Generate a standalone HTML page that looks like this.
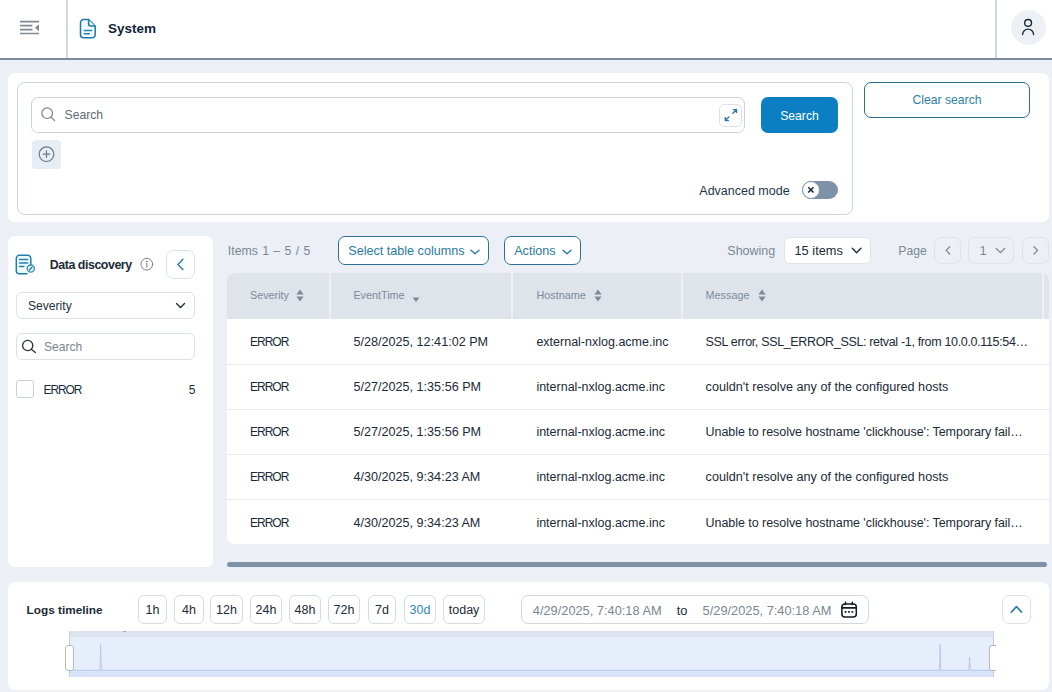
<!DOCTYPE html>
<html><head><meta charset="utf-8">
<style>
*{box-sizing:border-box;margin:0;padding:0}
html,body{width:1052px;height:692px;overflow:hidden;background:#ecf0f6;font-family:"Liberation Sans",sans-serif;color:#1c2b3a}
.a{position:absolute}
.t{position:absolute;line-height:1;white-space:nowrap}
svg{position:absolute;overflow:visible}
</style></head><body>
<!-- HEADER -->
<div class="a" style="left:0;top:0;width:1052px;height:58px;background:#fff"></div>
<div class="a" style="left:0;top:58px;width:1052px;height:2px;background:#7a8b9d"></div>
<div class="a" style="left:66px;top:0;width:2px;height:58px;background:#d3d8dd"></div>
<div class="a" style="left:995px;top:0;width:2px;height:58px;background:#d3d8dd"></div>
<svg style="left:0;top:0" width="60" height="58"><g stroke="#7f8a96" stroke-width="1.6" stroke-linecap="butt" fill="none">
<path d="M20 21.6H39M20 25.6H32.4M20 29.6H32.4M20 33.5H39"/></g>
<path d="M39 24.3V31.2L35 27.75Z" fill="#7f8a96"/></svg>
<svg style="left:79px;top:18px" width="18" height="21" fill="none" stroke="#1a79a6" stroke-width="1.5" stroke-linejoin="round" stroke-linecap="round">
<path d="M4.6 1.6H9.6L16.2 8.2V16.8A3 3 0 0 1 13.2 19.8H4.5A3 3 0 0 1 1.5 16.8V4.7A3.1 3.1 0 0 1 4.6 1.6Z" fill="#f3fbff"/>
<path d="M9.6 1.8V6A2 2 0 0 0 11.6 8H16" fill="#dff4fb"/>
<path d="M5.3 12.4H12.7M5.3 15.8H10.4" stroke="#1f88bb"/></svg>
<div class="t" style="left:108px;top:21.9px;font-size:13.5px;font-weight:bold;color:#10253a">System</div>
<div class="a" style="left:1011px;top:10px;width:35px;height:35px;border-radius:50%;background:#edf1f6"></div>
<svg style="left:1011px;top:10px" width="35" height="35" fill="none" stroke="#1b2838" stroke-width="1.4" stroke-linecap="round">
<circle cx="17.1" cy="12.9" r="3.4"/><path d="M11.6 24.6A5.5 5.5 0 0 1 22.6 24.6"/></svg>

<!-- SEARCH CARD -->
<div class="a" style="left:8px;top:73px;width:1041px;height:149px;background:#fff;border-radius:7px"></div>
<div class="a" style="left:17px;top:82px;width:836px;height:133px;border:1px solid #cfd4da;border-radius:8px"></div>
<div class="a" style="left:31px;top:97px;width:714px;height:36px;border:1px solid #cdd1d6;border-radius:7px"></div>
<svg style="left:40px;top:106px" width="16" height="16" fill="none" stroke="#7b8692" stroke-width="1.2" stroke-linecap="round">
<circle cx="7.2" cy="7.2" r="5.3"/><path d="M11.1 11.1L14.6 14.6"/></svg>
<div class="t" style="left:64.5px;top:108.6px;font-size:12.2px;color:#5f6a75">Search</div>
<div class="a" style="left:719px;top:104px;width:23px;height:23px;border:1px solid #dde1e5;border-radius:5px"></div>
<svg style="left:719px;top:104px" width="23" height="23" fill="none" stroke="#2b7ba6" stroke-width="1.45" stroke-linecap="round" stroke-linejoin="round">
<path d="M14.5 5.6H17.5V8.6M17.5 5.6L13.9 9.2M9.3 16.6H6.3V13.6M6.3 16.6L9.9 13"/></svg>
<div class="a" style="left:761px;top:97px;width:77px;height:36px;background:#0b7fc1;border-radius:7px"></div>
<div class="t" style="left:761px;width:77px;text-align:center;top:109.9px;font-size:12.2px;color:#fff">Search</div>
<div class="a" style="left:32px;top:140px;width:29px;height:29px;background:#e7edf5;border-radius:4px"></div>
<svg style="left:32px;top:140px" width="29" height="29" fill="none" stroke="#6f7b88" stroke-width="1.2" stroke-linecap="round">
<circle cx="14.5" cy="14.2" r="7.3"/><path d="M14.5 10.9V17.5M11.2 14.2H17.8"/></svg>
<div class="t" style="left:699.3px;top:184.9px;font-size:12.5px;color:#22364a">Advanced mode</div>
<div class="a" style="left:802px;top:181px;width:36px;height:18px;background:#7d91a8;border-radius:9px"></div>
<div class="a" style="left:802px;top:181px;width:18px;height:18px;background:#fff;border:1px solid #8596aa;border-radius:50%"></div>
<svg style="left:802px;top:181px" width="18" height="18" fill="none" stroke="#15263a" stroke-width="1.5" stroke-linecap="butt">
<path d="M6.2 6.2L11.5 11.5M11.5 6.2L6.2 11.5"/></svg>
<div class="a" style="left:864px;top:82px;width:166px;height:36px;border:1.5px solid #2c6f8d;border-radius:7px"></div>
<div class="t" style="left:864px;width:166px;text-align:center;top:94.2px;font-size:12.2px;color:#2e80a8">Clear search</div>


<!-- DATA DISCOVERY -->
<div class="a" style="left:8px;top:236px;width:205px;height:331px;background:#fff;border-radius:7px"></div>
<svg style="left:15px;top:254px" width="22" height="22" fill="none" stroke="#1c7fae" stroke-width="1.5" stroke-linecap="round">
<path d="M15.8 14.5V4.3A3 3 0 0 0 12.8 1.3H4.3A3 3 0 0 0 1.3 4.3V16.7A3 3 0 0 0 4.3 19.7H12" fill="#f3fbff"/>
<path d="M4.5 5.5H12.7M4.5 9H12.7M4.5 12.6H8.6" stroke="#2183b1"/>
<circle cx="15.8" cy="14.6" r="3.6" fill="#e3f5fc" stroke="#3b8db5" stroke-width="1.3"/>
<path d="M14.5 16L17 13.3" stroke="#2d7aa3" stroke-width="1.3"/></svg>
<div class="t" style="left:49.8px;top:258.9px;font-size:12.4px;letter-spacing:-0.45px;font-weight:bold;color:#1b2a38">Data discovery</div>
<svg style="left:140px;top:258px" width="14" height="14" fill="none" stroke="#78838e" stroke-width="1" stroke-linecap="round">
<circle cx="6.8" cy="6.2" r="5.9"/><path d="M6.8 5.4V9.2"/><circle cx="6.8" cy="3.5" r="0.45" fill="#707b86"/></svg>
<div class="a" style="left:166px;top:250px;width:29px;height:29px;border:1px solid #dde1e6;border-radius:7px"></div>
<svg style="left:166px;top:250px" width="29" height="29" fill="none" stroke="#2a7da6" stroke-width="1.4" stroke-linecap="round" stroke-linejoin="round">
<path d="M16.9 9.2L11.9 14.4L16.9 19.6"/></svg>
<div class="a" style="left:16px;top:292px;width:179px;height:27px;border:1px solid #dde1e6;border-radius:6px"></div>
<div class="t" style="left:28px;top:299.8px;font-size:12.1px;color:#1d2f40">Severity</div>
<svg style="left:170px;top:296px" width="20" height="20" fill="none" stroke="#22303e" stroke-width="1.4" stroke-linecap="round" stroke-linejoin="round">
<path d="M6.5 7.5L10.5 11.5L14.5 7.5"/></svg>
<div class="a" style="left:16px;top:333px;width:179px;height:27px;border:1px solid #dde1e6;border-radius:6px"></div>
<svg style="left:21px;top:339px" width="16" height="16" fill="none" stroke="#262f38" stroke-width="1.3" stroke-linecap="round">
<circle cx="6.7" cy="6.5" r="5.1"/><path d="M10.3 10.3L14.4 13.6"/></svg>
<div class="t" style="left:44px;top:341px;font-size:12.1px;color:#7c848d">Search</div>
<div class="a" style="left:16px;top:380px;width:18px;height:18px;border:1px solid #cbcfd5;border-radius:3px"></div>
<div class="t" style="left:43.5px;top:383.5px;font-size:12px;color:#1d2f40;letter-spacing:-1.1px">ERROR</div>
<div class="t" style="left:165px;width:30.5px;text-align:right;top:383.5px;font-size:12px;color:#1d2f40">5</div>

<!-- TOOLBAR -->
<div class="t" style="left:227.8px;top:244.9px;font-size:12.3px;word-spacing:0.9px;color:#7b8793">Items 1 – 5 / 5</div>
<div class="a" style="left:338px;top:236px;width:151px;height:29px;border:1px solid #2c7193;border-radius:7px;background:#fff"></div>
<div class="t" style="left:348.3px;top:245.4px;font-size:12.6px;color:#2b7aa2">Select table columns</div>
<svg style="left:468px;top:244.7px" width="14" height="14" fill="none" stroke="#2b7aa2" stroke-width="1.4" stroke-linecap="round" stroke-linejoin="round">
<path d="M3 5.2L7 8.8L11 5.2"/></svg>
<div class="a" style="left:504px;top:236px;width:77px;height:29px;border:1px solid #2c7193;border-radius:7px;background:#fff"></div>
<div class="t" style="left:514.2px;top:245.4px;font-size:12.6px;color:#2b7aa2">Actions</div>
<svg style="left:560px;top:244.7px" width="14" height="14" fill="none" stroke="#2b7aa2" stroke-width="1.4" stroke-linecap="round" stroke-linejoin="round">
<path d="M3 5.2L7 8.8L11 5.2"/></svg>
<div class="t" style="left:727.3px;top:244.8px;font-size:12.5px;color:#7b8793">Showing</div>
<div class="a" style="left:784px;top:237px;width:87px;height:27px;border:1px solid #e0e4e9;border-radius:6px;background:#fff"></div>
<div class="t" style="left:794.5px;top:245px;font-size:12.8px;color:#1b2a38">15 items</div>
<svg style="left:850px;top:244px" width="14" height="14" fill="none" stroke="#1b2a38" stroke-width="1.3" stroke-linecap="round" stroke-linejoin="round">
<path d="M2.3 4.3L6.6 8.7L10.9 4.3"/></svg>
<div class="t" style="left:898.3px;top:244.8px;font-size:12.2px;color:#7b8793">Page</div>
<div class="a" style="left:934px;top:237px;width:27px;height:27px;border:1px solid #dfe3e8;border-radius:7px"></div>
<svg style="left:934px;top:237px" width="27" height="27" fill="none" stroke="#7b8793" stroke-width="1.3" stroke-linecap="round" stroke-linejoin="round">
<path d="M15.7 9.8L12.1 13.4L15.7 17"/></svg>
<div class="a" style="left:968px;top:237px;width:46px;height:27px;border:1px solid #dfe3e8;border-radius:7px"></div>
<div class="t" style="left:979.5px;top:245px;font-size:12.8px;color:#7b8793">1</div>
<svg style="left:993px;top:244px" width="14" height="14" fill="none" stroke="#7b8793" stroke-width="1.3" stroke-linecap="round" stroke-linejoin="round">
<path d="M3.2 4.5L7.4 8.6L11.6 4.5"/></svg>
<div class="a" style="left:1022px;top:237px;width:27px;height:27px;border:1px solid #dfe3e8;border-radius:7px"></div>
<svg style="left:1022px;top:237px" width="27" height="27" fill="none" stroke="#7b8793" stroke-width="1.3" stroke-linecap="round" stroke-linejoin="round">
<path d="M12 9.8L15.6 13.4L12 17"/></svg>

<!-- TABLE -->
<div class="a" style="left:227px;top:273px;width:822px;height:271px;background:#fff;border-radius:7px 7px 0 7px;overflow:hidden">
<div class="a" style="left:0;top:0;width:822px;height:46px;background:#dfe4ea"></div>
<div class="a" style="left:102px;top:0;width:2px;height:46px;background:#eef1f5"></div>
<div class="a" style="left:284px;top:0;width:2px;height:46px;background:#eef1f5"></div>
<div class="a" style="left:454px;top:0;width:2px;height:46px;background:#eef1f5"></div>
<div class="a" style="left:815px;top:0;width:2px;height:46px;background:#eef1f5"></div>
<div class="a" style="left:0;top:91px;width:822px;height:1px;background:#e6e9ed"></div>
<div class="a" style="left:0;top:136px;width:822px;height:1px;background:#e6e9ed"></div>
<div class="a" style="left:0;top:181px;width:822px;height:1px;background:#e6e9ed"></div>
<div class="a" style="left:0;top:226px;width:822px;height:1px;background:#e6e9ed"></div>
</div>
<div class="t" style="left:250px;top:290.4px;font-size:10.8px;color:#7b8a9a">Severity</div>
<svg style="left:296px;top:288px" width="8" height="15"><path d="M0.4 6.4L4 1.4L7.6 6.4Z M0.4 8.6L4 13.6L7.6 8.6Z" fill="#7d8a99"/></svg><div class="t" style="left:353.4px;top:290.4px;font-size:10.8px;color:#7b8a9a">EventTime</div>
<svg style="left:412px;top:296px" width="8" height="7"><path d="M0.6 1.4L4 5.9L7.4 1.4Z" fill="#7d8a99"/></svg>
<div class="t" style="left:536.5px;top:290.4px;font-size:10.8px;color:#7b8a9a">Hostname</div>
<svg style="left:594px;top:288px" width="8" height="15"><path d="M0.4 6.4L4 1.4L7.6 6.4Z M0.4 8.6L4 13.6L7.6 8.6Z" fill="#7d8a99"/></svg><div class="t" style="left:705.6px;top:290.4px;font-size:10.8px;color:#7b8a9a">Message</div>
<svg style="left:758px;top:288px" width="8" height="15"><path d="M0.4 6.4L4 1.4L7.6 6.4Z M0.4 8.6L4 13.6L7.6 8.6Z" fill="#7d8a99"/></svg><div class="t" style="left:250px;top:336.2px;font-size:12px;letter-spacing:-1px;color:#1b2a38">ERROR</div>
<div class="t" style="left:353.6px;top:336.2px;font-size:12.6px;color:#1b2a38">5/28/2025, 12:41:02 PM</div>
<div class="t" style="left:536.4px;top:336.2px;font-size:12.5px;color:#1b2a38">external-nxlog.acme.inc</div>
<div class="t" style="left:705.6px;top:336.2px;font-size:12.5px;letter-spacing:-0.34px;color:#1b2a38">SSL error, SSL_ERROR_SSL: retval -1, from 10.0.0.115:54…</div>
<div class="t" style="left:250px;top:381.45px;font-size:12px;letter-spacing:-1px;color:#1b2a38">ERROR</div>
<div class="t" style="left:353.6px;top:381.45px;font-size:12.6px;color:#1b2a38">5/27/2025, 1:35:56 PM</div>
<div class="t" style="left:536.4px;top:381.45px;font-size:12.5px;color:#1b2a38">internal-nxlog.acme.inc</div>
<div class="t" style="left:705.6px;top:381.45px;font-size:12.65px;color:#1b2a38">couldn't resolve any of the configured hosts</div>
<div class="t" style="left:250px;top:426.2px;font-size:12px;letter-spacing:-1px;color:#1b2a38">ERROR</div>
<div class="t" style="left:353.6px;top:426.2px;font-size:12.6px;color:#1b2a38">5/27/2025, 1:35:56 PM</div>
<div class="t" style="left:536.4px;top:426.2px;font-size:12.5px;color:#1b2a38">internal-nxlog.acme.inc</div>
<div class="t" style="left:705.6px;top:426.2px;font-size:12.5px;letter-spacing:-0.05px;color:#1b2a38">Unable to resolve hostname 'clickhouse': Temporary fail…</div>
<div class="t" style="left:250px;top:471.3px;font-size:12px;letter-spacing:-1px;color:#1b2a38">ERROR</div>
<div class="t" style="left:353.6px;top:471.3px;font-size:12.6px;color:#1b2a38">4/30/2025, 9:34:23 AM</div>
<div class="t" style="left:536.4px;top:471.3px;font-size:12.5px;color:#1b2a38">internal-nxlog.acme.inc</div>
<div class="t" style="left:705.6px;top:471.3px;font-size:12.65px;color:#1b2a38">couldn't resolve any of the configured hosts</div>
<div class="t" style="left:250px;top:517.2px;font-size:12px;letter-spacing:-1px;color:#1b2a38">ERROR</div>
<div class="t" style="left:353.6px;top:517.2px;font-size:12.6px;color:#1b2a38">4/30/2025, 9:34:23 AM</div>
<div class="t" style="left:536.4px;top:517.2px;font-size:12.5px;color:#1b2a38">internal-nxlog.acme.inc</div>
<div class="t" style="left:705.6px;top:517.2px;font-size:12.5px;letter-spacing:-0.05px;color:#1b2a38">Unable to resolve hostname 'clickhouse': Temporary fail…</div>
<div class="a" style="left:227px;top:562px;width:820px;height:5px;background:#7f93a8;border-radius:3px"></div>

<!-- TIMELINE -->
<div class="a" style="left:8px;top:582px;width:1041px;height:108px;background:#fff;border-radius:7px"></div>
<div class="t" style="left:26.6px;top:604.5px;font-size:11.8px;font-weight:bold;color:#1b2a38">Logs timeline</div>
<div class="a" style="left:138px;top:595px;width:28.5px;height:28.5px;border:1px solid #d6dbe0;border-radius:6px"></div>
<div class="t" style="left:138.3px;width:28.5px;text-align:center;top:603.9px;font-size:12.5px;color:#1b2a38">1h</div>
<div class="a" style="left:174px;top:595px;width:29.5px;height:28.5px;border:1px solid #d6dbe0;border-radius:6px"></div>
<div class="t" style="left:174.3px;width:29.5px;text-align:center;top:603.9px;font-size:12.5px;color:#1b2a38">4h</div>
<div class="a" style="left:210px;top:595px;width:32.5px;height:28.5px;border:1px solid #d6dbe0;border-radius:6px"></div>
<div class="t" style="left:210.3px;width:32.5px;text-align:center;top:603.9px;font-size:12.5px;color:#1b2a38">12h</div>
<div class="a" style="left:250px;top:595px;width:31.5px;height:28.5px;border:1px solid #d6dbe0;border-radius:6px"></div>
<div class="t" style="left:250.3px;width:31.5px;text-align:center;top:603.9px;font-size:12.5px;color:#1b2a38">24h</div>
<div class="a" style="left:289px;top:595px;width:31.5px;height:28.5px;border:1px solid #d6dbe0;border-radius:6px"></div>
<div class="t" style="left:289.3px;width:31.5px;text-align:center;top:603.9px;font-size:12.5px;color:#1b2a38">48h</div>
<div class="a" style="left:328px;top:595px;width:31.5px;height:28.5px;border:1px solid #d6dbe0;border-radius:6px"></div>
<div class="t" style="left:328.3px;width:31.5px;text-align:center;top:603.9px;font-size:12.5px;color:#1b2a38">72h</div>
<div class="a" style="left:368px;top:595px;width:27.5px;height:28.5px;border:1px solid #d6dbe0;border-radius:6px"></div>
<div class="t" style="left:368.3px;width:27.5px;text-align:center;top:603.9px;font-size:12.5px;color:#1b2a38">7d</div>
<div class="a" style="left:404px;top:595px;width:31.5px;height:28.5px;border:1px solid #d6dbe0;border-radius:6px"></div>
<div class="t" style="left:404.3px;width:31.5px;text-align:center;top:603.9px;font-size:12.5px;color:#2f8ab3">30d</div>
<div class="a" style="left:443px;top:595px;width:41.5px;height:28.5px;border:1px solid #d6dbe0;border-radius:6px"></div>
<div class="t" style="left:443.3px;width:41.5px;text-align:center;top:603.9px;font-size:12.5px;color:#1b2a38">today</div>
<div class="a" style="left:521px;top:595.3px;width:348px;height:28.3px;border:1px solid #d3d8de;border-radius:7px"></div>
<div class="t" style="left:532.8px;top:605px;font-size:12.8px;color:#7b8691">4/29/2025, 7:40:18 AM</div>
<div class="t" style="left:676.8px;top:605px;font-size:12.8px;color:#1b2a38">to</div>
<div class="t" style="left:702.6px;top:605px;font-size:12.8px;color:#7b8691">5/29/2025, 7:40:18 AM</div>
<svg style="left:840px;top:601px" width="18" height="18" fill="none" stroke="#111a24" stroke-width="1.5" stroke-linecap="round">
<rect x="1.9" y="2.9" width="14.4" height="13" rx="3"/><path d="M1.9 6.9H16.3" stroke-width="1.9"/><path d="M5.5 1.2V3.6M12.3 1.2V3.6"/>
<rect x="4.6" y="9.9" width="1.9" height="1.9" rx="0.6" fill="#111a24" stroke="none"/><rect x="8.0" y="9.9" width="1.9" height="1.9" rx="0.6" fill="#111a24" stroke="none"/><rect x="11.4" y="9.9" width="1.9" height="1.9" rx="0.6" fill="#111a24" stroke="none"/></svg>
<div class="a" style="left:1002px;top:595px;width:28.5px;height:28.5px;border:1px solid #dde2e7;border-radius:7px"></div>
<svg style="left:1002px;top:595px" width="28" height="28" fill="none" stroke="#2a7da6" stroke-width="1.6" stroke-linecap="round" stroke-linejoin="round">
<path d="M9.3 17.1L14.5 11.6L19.6 17.1"/></svg>
<!-- chart -->
<div class="a" style="left:69px;top:631px;width:925px;height:46px;background:#e6eefc"></div>
<div class="a" style="left:69px;top:631px;width:925px;height:6px;background:#dfe5ee"></div>
<div class="a" style="left:69px;top:670px;width:925px;height:7px;background:#d8e3f8"></div>
<svg style="left:69px;top:631px" width="925" height="46">
<path d="M0 39.3H31L31.6 13.5L32.3 39.3H870.5L871.2 13.5L871.9 39.3H900L900.6 26L901.3 39.3H925" fill="none" stroke="#b9c8ec" stroke-width="1"/>
<path d="M0.5 0V46M924.5 0V46" stroke="#c3cfe6" stroke-width="1"/></svg>
<div class="a" style="left:65px;top:644.5px;width:9px;height:26px;background:#fff;border:1.2px solid #b3bac3;border-radius:3px"></div>
<div class="a" style="left:988px;top:644px;width:8px;height:27px;overflow:hidden"><div class="a" style="left:0.5px;top:0.5px;width:10px;height:26px;background:#fff;border:1.2px solid #b3bac3;border-radius:3px"></div></div>
<div class="a" style="left:123px;top:630.5px;width:3px;height:1.5px;background:#9aa5b3;border-radius:1px"></div>
</body></html>
